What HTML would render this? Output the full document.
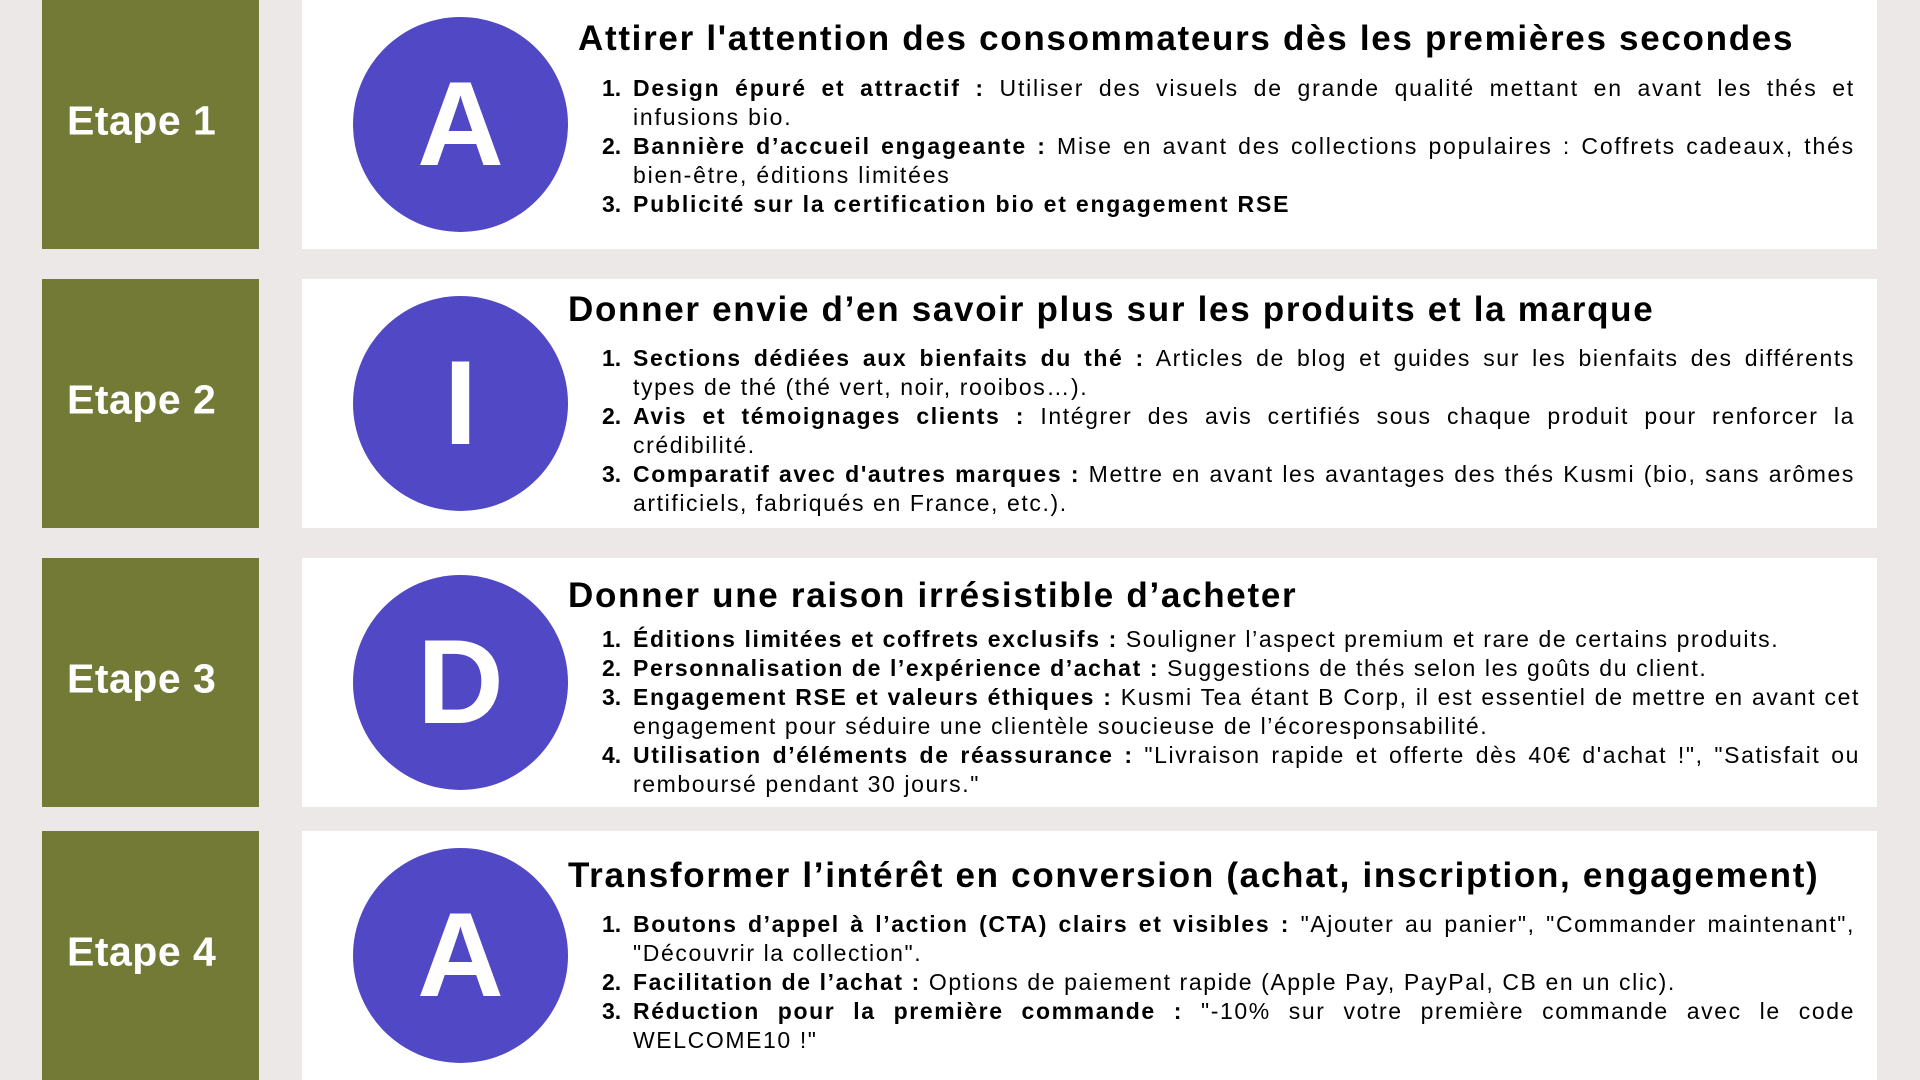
<!DOCTYPE html>
<html><head><meta charset="utf-8"><style>
*{margin:0;padding:0;box-sizing:border-box}
body{width:1920px;height:1080px;background:#ece8e7;position:relative;overflow:hidden;font-family:"Liberation Sans",sans-serif;color:#000}
.g{position:absolute;left:42px;width:217px;background:#737a35}
.g span{position:absolute;left:25px;top:50%;transform:translateY(-58%);color:#fff;font-weight:bold;font-size:41px;letter-spacing:0.5px;white-space:nowrap}
.w{position:absolute;left:302px;width:1575px;background:#fff}
.c{position:absolute;left:353px;width:215px;height:215px;border-radius:50%;background:#5048c4;color:#fff;font-weight:bold;font-size:120px;line-height:215px;text-align:center}
.t{position:absolute;font-weight:bold;font-size:35px;letter-spacing:1.7px;white-space:nowrap;line-height:40px}
ol{position:absolute;left:602px;width:1253px;font-size:23px;letter-spacing:1.6px;line-height:29px;list-style:none;text-align:justify}
ol li{position:relative;padding-left:31px}
ol li i{position:absolute;left:0;font-style:normal;font-weight:bold;letter-spacing:0}
b{font-weight:bold}
</style></head><body>
<div class="g" style="top:0;height:249px"><span>Etape 1</span></div>
<div class="g" style="top:279px;height:249px"><span>Etape 2</span></div>
<div class="g" style="top:558px;height:249px"><span>Etape 3</span></div>
<div class="g" style="top:831px;height:249px"><span>Etape 4</span></div>
<div class="w" style="top:0;height:249px"></div>
<div class="w" style="top:279px;height:249px"></div>
<div class="w" style="top:558px;height:249px"></div>
<div class="w" style="top:831px;height:249px"></div>
<div class="c" style="top:17px">A</div>
<div class="c" style="top:296px">I</div>
<div class="c" style="top:575px">D</div>
<div class="c" style="top:848px">A</div>

<div class="t" style="left:578px;top:19px">Attirer l'attention des consommateurs dès les premières secondes</div>
<ol style="top:74px;letter-spacing:1.8px">
<li><i>1.</i><b>Design épuré et attractif :</b> Utiliser des visuels de grande qualité mettant en avant les thés et infusions&nbsp;bio.</li>
<li><i>2.</i><b>Bannière d’accueil engageante :</b> Mise en avant des collections populaires : Coffrets cadeaux, thés bien-être, éditions limitées</li>
<li><i>3.</i><b>Publicité sur la certification bio et engagement RSE</b></li>
</ol>

<div class="t" style="left:568px;top:290px">Donner envie d’en savoir plus sur les produits et la marque</div>
<ol style="top:344px">
<li><i>1.</i><b>Sections dédiées aux bienfaits du thé :</b> Articles de blog et guides sur les bienfaits des différents types de thé (thé vert, noir, rooibos…).</li>
<li><i>2.</i><b>Avis et témoignages clients :</b> Intégrer des avis certifiés sous chaque produit pour renforcer la crédibilité.</li>
<li><i>3.</i><b>Comparatif avec d'autres marques :</b> Mettre en avant les avantages des thés Kusmi (bio, sans arômes artificiels, fabriqués en France, etc.).</li>
</ol>

<div class="t" style="left:568px;top:576px">Donner une raison irrésistible d’acheter</div>
<ol style="top:625px;width:1258px">
<li><i>1.</i><b>Éditions limitées et coffrets exclusifs :</b> Souligner l’aspect premium et rare de certains produits.</li>
<li><i>2.</i><b>Personnalisation de l’expérience d’achat :</b> Suggestions de thés selon les goûts du client.</li>
<li><i>3.</i><b>Engagement RSE et valeurs éthiques :</b> Kusmi Tea étant B Corp, il est essentiel de mettre en avant cet engagement pour séduire une clientèle soucieuse de l’écoresponsabilité.</li>
<li><i>4.</i><b>Utilisation d’éléments de réassurance :</b> "Livraison rapide et offerte dès 40€ d'achat !", "Satisfait ou remboursé pendant 30 jours."</li>
</ol>

<div class="t" style="left:568px;top:856px">Transformer l’intérêt en conversion (achat, inscription, engagement)</div>
<ol style="top:910px">
<li><i>1.</i><b>Boutons d’appel à l’action (CTA) clairs et visibles :</b> "Ajouter au panier", "Commander maintenant", "Découvrir la collection".</li>
<li><i>2.</i><b>Facilitation de l’achat :</b> Options de paiement rapide (Apple Pay, PayPal, CB en un clic).</li>
<li><i>3.</i><b>Réduction pour la première commande :</b> "-10% sur votre première commande avec le code WELCOME10 !"</li>
</ol>
</body></html>
